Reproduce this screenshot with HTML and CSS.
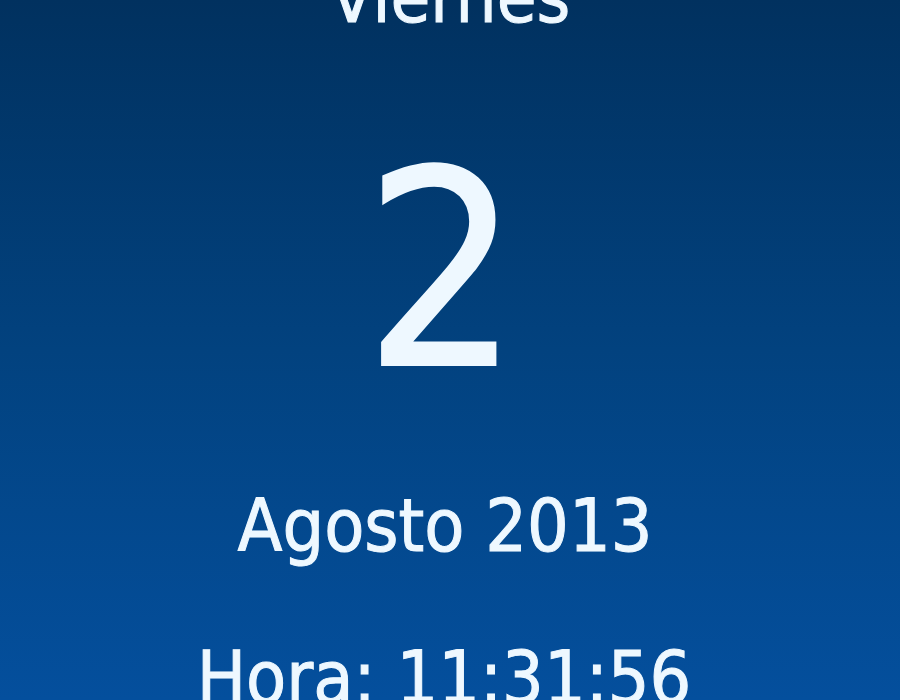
FILE: index.html
```html
<!DOCTYPE html>
<html lang="es">
<head>
<meta charset="utf-8">
<title>Calendario</title>
<link rel="stylesheet" href="styles.css">
</head>
<body>
<main class="widget">
  <div class="dayname">Viernes</div>
  <div class="daynum">2</div>
  <div class="month">Agosto 2013</div>
  <div class="time">Hora: 11:31:56</div>
</main>
</body>
</html>
```

FILE: styles.css
```css
html, body {
  margin: 0;
  padding: 0;
  height: 100%;
}
body {
  width: 900px;
  height: 700px;
  overflow: hidden;
  background: linear-gradient(to bottom, #01315f 0%, #02427f 50%, #044f9d 100%);
  font-family: "DejaVu Sans Condensed", "DejaVu Sans", sans-serif;
  font-stretch: condensed;
  color: #eef8ff;
}
.widget {
  display: flex;
  flex-direction: column;
  align-items: center;
}
.dayname {
  font-size: 72px;
  line-height: 72px;
  height: 72px;
  margin-top: -39px;
  -webkit-text-stroke: 1px #eef8ff;
}
.daynum {
  font-size: 272px;
  line-height: 272px;
  height: 272px;
  margin-top: 102px;
  padding-right: 16px;
  -webkit-text-stroke: 2px #eef8ff;
}
.month {
  font-size: 73px;
  line-height: 73px;
  height: 73px;
  margin-top: 82px;
  padding-right: 10px;
  -webkit-text-stroke: 1px #eef8ff;
}
.time {
  font-size: 73px;
  line-height: 73px;
  height: 73px;
  margin-top: 79px;
  padding-right: 12px;
  -webkit-text-stroke: 1px #eef8ff;
}
```
